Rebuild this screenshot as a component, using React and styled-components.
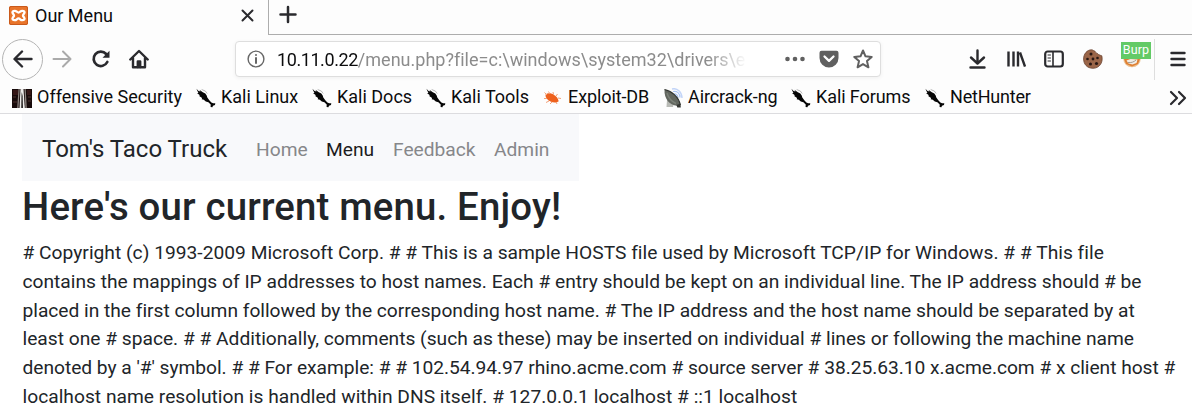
import React from "react";
import styled, { createGlobalStyle } from "styled-components";

const Global = createGlobalStyle`
  * { box-sizing: border-box; }
  html, body { margin: 0; background: #fff; overflow: hidden; }
  body { font-family: Roboto, "Liberation Sans", sans-serif; color: #212529; }
  svg { display: block; flex: none; }
`;
const Window = styled.div`
  width: 1192px;
  height: 417px;
  overflow: hidden;
  background: #fff;
`;
const Chrome = styled.header`
  height: 114px;
  background: #fdfdfd;
  border-bottom: 1px solid #dcdcdf;
`;
const TabStrip = styled.div`
  display: flex;
  height: 35px;
`;
const Tab = styled.div`
  display: flex;
  align-items: center;
  width: 268px;
  padding: 0 12px 4px 9px;
`;
const TabTitle = styled.span`
  flex: 1;
  margin-left: 7px;
  color: #0c0c0d;
  font-size: 18px;
  line-height: 22px;
`;
const TabRest = styled.div`
  flex: 1;
  padding: 5px 0 0 9px;
  border-left: 1px solid #adadad;
  border-bottom: 1px solid #adadad;
`;
const Toolbar = styled.div`
  display: flex;
  align-items: center;
  height: 48px;
  padding-left: 2px;
`;
const BackButton = styled.div`
  display: grid;
  place-items: center;
  width: 41px;
  height: 41px;
  border: 1px solid #b4b4b4;
  border-radius: 50%;
`;
const ToolIcon = styled.div`
  margin-left: ${(p) => p.$gap}px;
`;
const AddressBar = styled.div`
  display: flex;
  align-items: center;
  width: 646px;
  height: 36px;
  margin-left: 86px;
  padding: 0 7px 0 11px;
  background: #fff;
  border: 1px solid #dedede;
  border-radius: 4px;
  box-shadow: 0 1px 4px rgba(0, 0, 0, 0.06);
`;
const Url = styled.div`
  width: 505px;
  margin-left: 12px;
  padding-top: 1px;
  white-space: nowrap;
  color: #8c8c8c;
  font-size: 18px;
  line-height: 24px;
  letter-spacing: 0.01px;
  mask-image: linear-gradient(to right, #000 430px, transparent 470px);
  b { font-weight: 400; color: #0c0c0d; letter-spacing: -0.42px; }
`;
const Extension = styled.div`
  position: relative;
  margin-left: 19px;
`;
const Badge = styled.span`
  position: absolute;
  left: -1px;
  top: -7px;
  width: 30px;
  height: 17px;
  background: #63ca66;
  color: #fff;
  font-size: 12.5px;
  line-height: 16px;
  letter-spacing: 0.1px;
  text-align: center;
`;
const Divider = styled.div`
  width: 1px;
  height: 41px;
  margin: 0 15px 0 12px;
  background: #dedede;
`;
const Bookmarks = styled.nav`
  display: flex;
  align-items: center;
  height: 30px;
  padding-left: 12px;
`;
const Bookmark = styled.div`
  display: flex;
  align-items: center;
  width: ${(p) => p.$width}px;
  gap: 5px;
  color: #0c0c0d;
  font-size: 18px;
  line-height: 22px;
  letter-spacing: ${(p) => p.$spacing || 0}px;
  white-space: nowrap;
  span { padding-bottom: 2px; }
`;
const Overflow = styled.div`
  margin-left: auto;
  padding-right: 5px;
`;
const Page = styled.main`
  padding-left: 22px;
`;
const Navbar = styled.nav`
  display: flex;
  align-items: center;
  width: 557px;
  height: 67px;
  padding: 3px 0 0 20px;
  background: #f8f9fb;
`;
const Brand = styled.span`
  width: 214px;
  padding-bottom: 1px;
  color: #212529;
  font-size: 24px;
  line-height: 36px;
`;
const NavLink = styled.span`
  width: ${(p) => p.$width}px;
  color: ${(p) => (p.$active ? "#1c1c1d" : "#86878a")};
  font-size: 19.2px;
  line-height: 29px;
`;
const Heading = styled.h1`
  margin: 3px 0 9px;
  font-size: 38.4px;
  font-weight: 500;
  line-height: 46px;
  letter-spacing: 0.16px;
`;
const Line = styled.div`
  height: 28.8px;
  padding-left: 0.5px;
  font-size: 19.2px;
  line-height: 28.8px;
  white-space: nowrap;
  letter-spacing: ${(p) => p.$spacing || 0}px;
`;

const Stroke = ({ w = 20, h = 20, color = "#2a2a2e", sw = 2.2, children }) => (
  <svg width={w} height={h} viewBox={`0 0 ${w} ${h}`} fill="none" stroke={color} strokeWidth={sw} strokeLinecap="round" strokeLinejoin="round">
    {children}
  </svg>
);
const XamppIcon = () => (
  <svg width="19" height="19" viewBox="0 0 19 19">
    <rect width="19" height="19" rx="2" fill="#e8742a" />
    <rect x=".5" y=".5" width="18" height="18" rx="1.5" fill="none" stroke="#c9591b" />
    <path d="M5.800 4.800c-2 0-2.800 1.200-2.100 2.300.5.900 1.300 1.300 1.300 2.400s-.8 1.500-1.300 2.400c-.7 1.100.1 2.300 2.100 2.300 1.700 0 2.200-1.800 3.700-1.800s2 1.800 3.700 1.800c2 0 2.800-1.200 2.100-2.300-.5-.9-1.300-1.300-1.300-2.400s.8-1.500 1.300-2.400c.7-1.100-.1-2.300-2.100-2.300-1.700 0-2.200 1.800-3.700 1.800S7.500 4.800 5.800 4.800z" fill="none" stroke="#fff" strokeWidth="2.300" strokeLinejoin="round" />
  </svg>
);
const OffsecIcon = () => (
  <svg width="20" height="19" viewBox="0 0 20 19">
    <rect width="20" height="19" fill="#180b0b" />
    <path d="M1 1h5v5H1zM15 1h4v5h-4z" fill="#351616" />
    <path d="M1 13h4M16 12h3M1 8h3M16 8h3" stroke="#4e3230" strokeWidth="1.200" />
    <path d="M6.500 0h1.200L6.500 19H5.200zM12.500 0h1.200l1.100 19h-1.400z" fill="#8e8581" />
    <path d="M8.500 0h3l1.300 19H7.500z" fill="#eeecea" />
    <path d="M9.800 3l.8 4 .3 12H9.300l.2-12z" fill="#171212" />
  </svg>
);
const KaliIcon = () => (
  <svg width="20" height="20" viewBox="0 0 20 20">
    <path d="M.4.8l2.200 2.100 1.900.6-1.100-1.800 3.400 2.500 2.500 1.200 1.400 2 .6 2.200 2.200 2.900 1.900 1.900 1.700.8 2.200.1-.3 1.600-2 .8-.6 1.500-1.800-.2.1-2.500-2.300-2.300-2.600-.8-2-1.700-2.100-.5.4-1.100-3.300-2.300 1.400-.2L1 5l1.400-.1z" fill="#050505" />
    <path d="M5.700 1.500l3.700 1.600 1.800 2.400" stroke="#888" strokeWidth=".6" fill="none" />
  </svg>
);
const ExploitIcon = () => (
  <svg width="20" height="18" viewBox="0 0 20 18">
    <path d="M2.500 5.500c2-1.700 6-1.500 9 .7 2.500 1.400 3.500 3.500 4.200 6-2 1.800-5.200 1.800-8.200.3C4.200 11 2.200 8.500 2.500 5.500z" fill="#ee611d" />
    <path d="M4 6L1.500 3.500M7 5L5.500 2.500M10.500 5.500L10 3M4 9.500L1 9.500M6 12l-3 1.500M9 13l-2 2M13 13l1 2M15 9l3 .5M13 7l1.500-2" stroke="#f3a27a" strokeWidth="1" fill="none" />
  </svg>
);
const AircrackIcon = () => (
  <svg width="19" height="20" viewBox="0 0 19 20">
    <path d="M8 1c5-1.500 10 3 10 9" stroke="#c3d5f8" strokeWidth="1.400" fill="none" />
    <path d="M9 3.500c4-1 7 2 7 6M10 6c2-.5 4 1 4 4" stroke="#adc6f3" strokeWidth="1.200" fill="none" />
    <path d="M3 12l-.5 7H9l1-4z" fill="#b8bab5" />
    <path d="M.5 1.500C7 2.500 15 9 16.300 17l-3.500.8C5.500 17 0 11 .5 1.500z" fill="#62665f" />
    <path d="M.5 1.500C7 2.500 15 9 16.300 17" stroke="#30332f" strokeWidth="1.200" fill="none" />
    <path d="M3 5c1.500 5 4.500 8.500 9 10.500" stroke="#7b8178" strokeWidth="1.500" fill="none" />
    <path d="M12.500 17l4-1.500.3 4h-3.500z" fill="#343632" />
  </svg>
);
const CookieIcon = () => (
  <svg width="20" height="20" viewBox="0 0 20 20">
    <path d="M8.500.8c1.700 0 2 1.200 3.500 1.400.8 2.500 2.500 1.500 3.500 3.300 1.200.2 1.800 1.200 3.300 1.300C20.500 14 16 19.300 10 19.300S.6 15 .6 10C.6 5 4 .8 8.500.8z" fill="#9a6548" stroke="#6b4230" strokeWidth=".8" />
    <g fill="#281713"><circle cx="8" cy="5" r="1.500" /><circle cx="4.500" cy="10" r="1.300" /><circle cx="10" cy="10" r="1.400" /><circle cx="14.500" cy="9" r="1.300" /><circle cx="7.500" cy="15" r="1.500" /><circle cx="13.500" cy="14.500" r="1.600" /></g>
  </svg>
);
const BurpIcon = () => (
  <svg width="20" height="20" viewBox="0 0 20 20">
    <circle cx="10" cy="9.500" r="8.800" fill="#edc293" />
    <path d="M2 10c4-1 12-1 16 0l-2 5-6 2.500L4 15z" fill="#df8033" />
    <path d="M4.500 11.500l4-1.500 7 .5-1 3.500-4 1.500-4-1z" fill="#f1ede6" />
    <path d="M6 13.500c3 .5 6-.5 8-2.500" stroke="#a39a90" strokeWidth="1" fill="none" />
  </svg>
);

const BOOKMARKS = [
  ["Offensive Security", OffsecIcon, 184, 0],
  ["Kali Linux", KaliIcon, 116, 0],
  ["Kali Docs", KaliIcon, 114, 0],
  ["Kali Tools", KaliIcon, 117, 0],
  ["Exploit-DB", ExploitIcon, 121, -0.1],
  ["Aircrack-ng", AircrackIcon, 127, -0.1],
  ["Kali Forums", KaliIcon, 134, -0.1],
  ["NetHunter", KaliIcon, 120, -0.2],
];
const LINES = [
  ["# Copyright (c) 1993-2009 Microsoft Corp. # # This is a sample HOSTS file used by Microsoft TCP/IP for Windows. # # This file", 0.018],
  ["contains the mappings of IP addresses to host names. Each # entry should be kept on an individual line. The IP address should # be", 0],
  ["placed in the first column followed by the corresponding host name. # The IP address and the host name should be separated by at", -0.016],
  ["least one # space. # # Additionally, comments (such as these) may be inserted on individual # lines or following the machine name", 0],
  ["denoted by a '#' symbol. # # For example: # # 102.54.94.97 rhino.acme.com # source server # 38.25.63.10 x.acme.com # x client host #", -0.027],
  ["localhost name resolution is handled within DNS itself. # 127.0.0.1 localhost # ::1 localhost", 0.02],
];

export default function App() {
  return (
    <Window>
      <Global />
      <Chrome>
        <TabStrip>
          <Tab>
            <XamppIcon />
            <TabTitle>Our Menu</TabTitle>
            <Stroke w={17} h={17} sw={2}><path d="M3.500 3.500l10 10M13.500 3.500l-10 10" /></Stroke>
          </Tab>
          <TabRest>
            <Stroke sw={2.500}><path d="M10 2v15M2.500 9.500h15" /></Stroke>
          </TabRest>
        </TabStrip>
        <Toolbar>
          <BackButton>
            <Stroke sw={2.400}><path d="M18.500 10H2M9 2.500L1.500 10 9 17.500" /></Stroke>
          </BackButton>
          <ToolIcon $gap={9}><Stroke color="#aaa" sw={2}><path d="M1.500 10H18M11 2.500l7.500 7.500-7.500 7.500" /></Stroke></ToolIcon>
          <ToolIcon $gap={19}><Stroke sw={2.700}><path d="M16.300 13A7.200 7.200 0 1 1 15.200 5" /><path d="M18.500 1.800v7H11.500z" fill="#2a2a2e" stroke="none" /></Stroke></ToolIcon>
          <ToolIcon $gap={18}><Stroke sw={2.400}><path d="M1.300 10.500L10 2l8.700 8.500M4 9v9.300h12V9" /><path d="M8.800 18v-5.500h2.400v5.500" /></Stroke></ToolIcon>
          <AddressBar>
            <Stroke w={18} h={18} sw={1.400} color="#666"><circle cx="9" cy="9" r="7.900" /><path d="M9 8v5" strokeWidth="2" /><path d="M9 5v.1" strokeWidth="2" /></Stroke>
            <Url><b>10.11.0.22</b>/menu.php?file=c:\windows\system32\drivers\e</Url>
            <ToolIcon $gap={16}><svg width="20" height="20" fill="#606060"><circle cx="2.500" cy="10" r="2.300" /><circle cx="10" cy="10" r="2.300" /><circle cx="17.500" cy="10" r="2.300" /></svg></ToolIcon>
            <ToolIcon $gap={14}><svg width="20" height="20"><path d="M2.500 1.800h15a2 2 0 0 1 2 2V9a9.500 9.500 0 0 1-19 0V3.800a2 2 0 0 1 2-2z" fill="#606060" /><path d="M5.500 7.500L10 11.800l4.500-4.300" stroke="#fff" strokeWidth="2.300" fill="none" strokeLinecap="round" strokeLinejoin="round" /></svg></ToolIcon>
            <ToolIcon $gap={14}><Stroke sw={2} color="#606060"><path d="M10 1.500l2.500 5.800 6.200.6-4.700 4.200 1.400 6.200L10 15.100l-5.400 3.200L6 12.100 1.300 7.900l6.200-.6z" /></Stroke></ToolIcon>
          </AddressBar>
          <ToolIcon $gap={86}><Stroke sw={2.400}><path d="M10.500 1.500v12.500M4 8.500l6.500 6 6.500-6M3.500 18.500h14" /></Stroke></ToolIcon>
          <ToolIcon $gap={19}><Stroke sw={2.400}><path d="M2.500 2.500v15M7.500 2.500v15M12 2.500v15M14 3.500l5 14" strokeLinecap="butt" /></Stroke></ToolIcon>
          <ToolIcon $gap={18}><Stroke><rect x="1.200" y="2.500" width="17.600" height="15" rx="2.500" /><path d="M9 3v14" strokeWidth="1.600" /><path d="M4 6h2.500M4 9h2.500M4 12h2.500" strokeWidth="1" /></Stroke></ToolIcon>
          <ToolIcon $gap={19}><CookieIcon /></ToolIcon>
          <Extension><BurpIcon /><Badge>Burp</Badge></Extension>
          <Divider />
          <Stroke w={16} h={16} sw={2.400}><path d="M1.500 2h13M1.500 8h13M1.500 14h13" /></Stroke>
        </Toolbar>
        <Bookmarks>
          {BOOKMARKS.map(([label, Icon, width, spacing]) => (
            <Bookmark key={label} $width={width} $spacing={spacing}><Icon /><span>{label}</span></Bookmark>
          ))}
          <Overflow><Stroke w={18} h={16} sw={2.200}><path d="M2 2l6 6-6 6M10 2l6 6-6 6" /></Stroke></Overflow>
        </Bookmarks>
      </Chrome>
      <Page>
        <Navbar>
          <Brand>Tom's Taco Truck</Brand>
          <NavLink $width={70}>Home</NavLink>
          <NavLink $width={67} $active>Menu</NavLink>
          <NavLink $width={101}>Feedback</NavLink>
          <NavLink $width={60}>Admin</NavLink>
        </Navbar>
        <Heading>Here's our current menu. Enjoy!</Heading>
        {LINES.map(([text, spacing]) => <Line key={text} $spacing={spacing}>{text}</Line>)}
      </Page>
    </Window>
  );
}
